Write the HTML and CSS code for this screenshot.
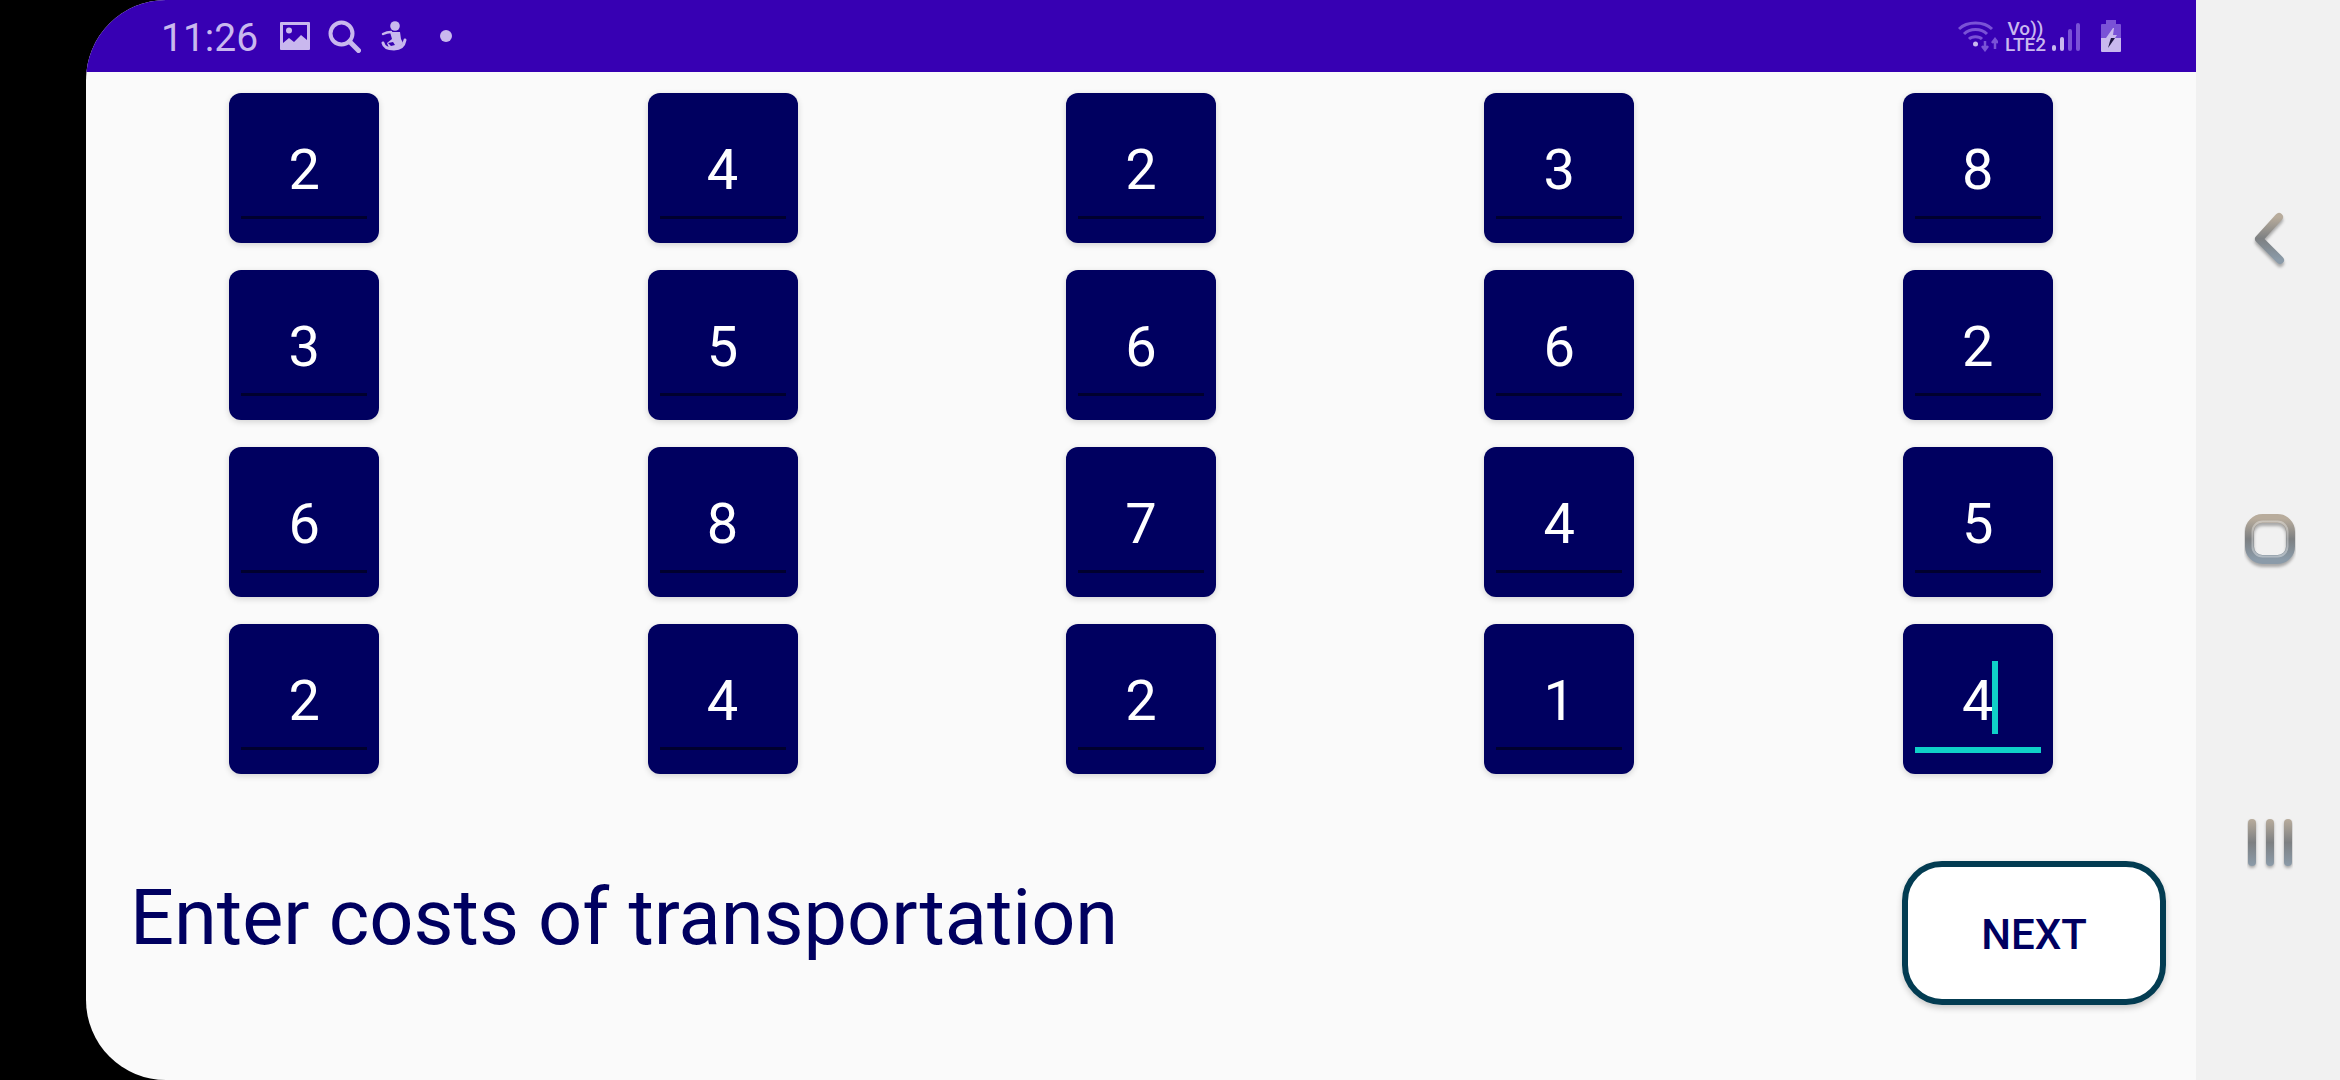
FILE: index.html
```html
<!DOCTYPE html>
<html lang="en">

<head>
    <meta charset="UTF-8">
    <title>Enter costs of transportation</title>
    <link rel="stylesheet" href="styles.css">
</head>

<body>
    <div class="screen">
        <!-- Status bar -->
        <div class="status-bar">
            <div class="status-left">
                <span class="time">11:26</span>
                <svg class="icon-gallery" width="30" height="28" viewBox="0 0 30 28">
                    <path fill="#c9b8ee" fill-rule="evenodd" d="M1 0h28a1 1 0 0 1 1 1v26a1 1 0 0 1-1 1H1a1 1 0 0 1-1-1V1a1 1 0 0 1 1-1zM3 3v18l6-5 5 4 7-7 6 5V3z"/>
                    <circle cx="9" cy="8.500" r="3" fill="#c9b8ee"/>
                </svg>
                <svg class="icon-search" width="33" height="33" viewBox="0 0 33 33">
                    <circle cx="13.500" cy="13.500" r="11" fill="none" stroke="#c9b8ee" stroke-width="4"/>
                    <path d="M21.500 21.500l9 9" stroke="#c9b8ee" stroke-width="5" stroke-linecap="round"/>
                </svg>
                <svg class="icon-figure" width="26" height="30" viewBox="0 0 26 30">
                    <circle cx="14" cy="5" r="4.800" fill="#c9b8ee"/>
                    <path fill="none" stroke="#c9b8ee" stroke-width="2.500" stroke-linecap="round" d="M2 13c2-1 5-2 8-2"/>
                    <path fill="#c9b8ee" d="M9 11h10l1 7 2 4-4 5H8l-2-5 5-4z"/>
                    <path fill="none" stroke="#c9b8ee" stroke-width="3" stroke-linecap="round" d="M2 22c1 5 6 6 11 6 6 0 10-3 11-9"/>
                    <path fill="#3700b3" d="M7 22l5-1 2 3-4 1z"/>
                </svg>
                <span class="dot"></span>
            </div>
            <div class="status-right">
                <svg class="icon-wifi" width="40" height="32" viewBox="0 0 40 32">
                    <g fill="none" stroke="#7a52d6" stroke-width="3">
                        <path d="M1 9c8-8 25-8 33 0"/>
                        <path d="M6 14c6-6 17-6 23 0"/>
                        <path d="M11 19c3-3 10-3 13 0"/>
                    </g>
                    <circle cx="17.500" cy="24" r="2.500" fill="#c9b8ee"/>
                    <path d="M27 21v8M24 26l3 4 3-4" fill="none" stroke="#7a52d6" stroke-width="2.500"/>
                    <path d="M37 29v-9M34 23l3-4 3 4" fill="none" stroke="#7a52d6" stroke-width="2.500"/>
                </svg>
                <div class="volte">Vo))<br>LTE2</div>
                <div class="signal">
                    <span class="bar bar-1"></span>
                    <span class="bar bar-2"></span>
                    <span class="bar bar-3"></span>
                    <span class="bar bar-4"></span>
                </div>
                <svg class="icon-battery" width="20" height="32" viewBox="0 0 20 32">
                    <path fill="#7a52d6" d="M5 0h10v4h4a1 1 0 0 1 1 1v13H0V5a1 1 0 0 1 1-1h4z"/>
                    <path fill="#c9b8ee" d="M0 18h20v13a1 1 0 0 1-1 1H1a1 1 0 0 1-1-1z"/>
                    <path fill="#c9b8ee" d="M12 8L5 18h5l-1 3h3l4-6h-4l1-7z"/>
                    <path fill="#1c1240" d="M10 18h4l-7 10 2-7 1-3z"/>
                </svg>
            </div>
        </div>

        <!-- Cost inputs -->
        <div class="content">
            <div class="cost-grid">
                <div class="cell">2</div>
                <div class="cell">4</div>
                <div class="cell">2</div>
                <div class="cell">3</div>
                <div class="cell">8</div>
                <div class="cell">3</div>
                <div class="cell">5</div>
                <div class="cell">6</div>
                <div class="cell">6</div>
                <div class="cell">2</div>
                <div class="cell">6</div>
                <div class="cell">8</div>
                <div class="cell">7</div>
                <div class="cell">4</div>
                <div class="cell">5</div>
                <div class="cell">2</div>
                <div class="cell">4</div>
                <div class="cell">2</div>
                <div class="cell">1</div>
                <div class="cell focused">4<span class="caret"></span></div>
            </div>

            <div class="footer-row">
                <h1 class="title">Enter costs of transportation</h1>
                <button class="next-button">NEXT</button>
            </div>
        </div>
    </div>

    <!-- Navigation bar -->
    <div class="nav-bar">
        <svg class="nav-back" width="36" height="58" viewBox="0 0 36 58">
            <defs>
                <linearGradient id="chrome" x1="0" y1="0" x2="0" y2="1">
                    <stop offset="0" stop-color="#b8ac9c"/>
                    <stop offset="0.5" stop-color="#7d8082"/>
                    <stop offset="1" stop-color="#8b9ba9"/>
                </linearGradient>
                <filter id="soft" x="-30%" y="-30%" width="160%" height="160%">
                    <feGaussianBlur stdDeviation="1.500"/>
                </filter>
            </defs>
            <path d="M27 5L7 27l21 21" fill="none" stroke="rgba(0,0,0,0.3)" stroke-width="8" stroke-linecap="round" stroke-linejoin="round" transform="translate(0 3)" filter="url(#soft)"/>
            <path d="M27 5L7 27l21 21" fill="none" stroke="url(#chrome)" stroke-width="8" stroke-linecap="round" stroke-linejoin="round"/>
        </svg>
        <svg class="nav-home" width="52" height="58" viewBox="0 0 52 58">
            <rect x="5.500" y="8.500" width="41" height="41" rx="13" fill="none" stroke="rgba(0,0,0,0.3)" stroke-width="9" filter="url(#soft)"/>
            <rect x="5.500" y="5.500" width="41" height="41" rx="13" fill="none" stroke="url(#chrome)" stroke-width="9"/>
            <rect x="8.500" y="8.500" width="35" height="35" rx="10" fill="none" stroke="rgba(255,255,255,0.35)" stroke-width="2"/>
        </svg>
        <svg class="nav-recent" width="46" height="54" viewBox="0 0 46 54">
            <g fill="rgba(0,0,0,0.3)" filter="url(#soft)">
                <rect x="1" y="3" width="8" height="47" rx="4"/>
                <rect x="19" y="3" width="8" height="47" rx="4"/>
                <rect x="37" y="3" width="8" height="47" rx="4"/>
            </g>
            <g fill="url(#chrome)">
                <rect x="1" y="1" width="8" height="47" rx="4"/>
                <rect x="19" y="1" width="8" height="47" rx="4"/>
                <rect x="37" y="1" width="8" height="47" rx="4"/>
            </g>
        </svg>
    </div>
</body>

</html>
```

FILE: styles.css
```css
body {
    margin: 0;
    width: 2340px;
    height: 1080px;
    padding-left: 86px;
    box-sizing: border-box;
    display: flex;
    background-color: #000;
    font-family: 'Roboto', sans-serif;
    overflow: hidden;
}

.screen {
    width: 2110px;
    height: 1080px;
    display: flex;
    flex-direction: column;
    background-color: #fafafa;
    border-radius: 80px 0 0 80px;
    overflow: hidden;
}

.status-bar {
    height: 72px;
    flex-shrink: 0;
    background-color: #3700b3;
    color: #c9b8ee;
    display: flex;
    justify-content: space-between;
    align-items: center;
    padding: 0 75px 0 75px;
}

.status-left,
.status-right {
    display: flex;
    align-items: center;
}

.time {
    font-size: 39px;
    line-height: 67px;
    padding-top: 5px;
    margin-right: 22px;
}

.icon-search {
    margin-left: 18px;
}

.icon-figure {
    margin-left: 20px;
}

.dot {
    width: 12px;
    height: 12px;
    border-radius: 50%;
    background-color: #c9b8ee;
    margin-left: 33px;
}

.volte {
    margin-left: 7px;
    padding-top: 1px;
    font-size: 19px;
    font-weight: 500;
    line-height: 16px;
    text-align: center;
}

.signal {
    display: flex;
    align-items: flex-end;
    gap: 4px;
    height: 28px;
    margin-left: 6px;
    margin-right: 21px;
    padding-top: 1px;
}

.bar {
    width: 4px;
    background-color: #7a52d6;
    border-radius: 2px;
}

.bar-1 {
    height: 6px;
    background-color: #c9b8ee;
}

.bar-2 {
    height: 14px;
    background-color: #c9b8ee;
}

.bar-3 {
    height: 22px;
}

.bar-4 {
    height: 28px;
}

.content {
    flex: 1;
    display: flex;
    flex-direction: column;
    padding: 21px 30px 0 44px;
}

.cost-grid {
    display: grid;
    grid-template-columns: repeat(5, 150px);
    grid-auto-rows: 150px;
    justify-content: space-between;
    row-gap: 27px;
    width: 1823.6px;
    margin-left: 99.2px;
}

.cell {
    position: relative;
    display: flex;
    justify-content: center;
    align-items: center;
    box-sizing: border-box;
    padding-top: 4px;
    background-color: #000060;
    border-radius: 12px;
    box-shadow: 0 2px 6px rgba(0, 0, 0, 0.16);
    color: #fff;
    font-size: 56px;
}

/* edit text underline */
.cell::after {
    content: "";
    position: absolute;
    left: 12px;
    right: 12px;
    bottom: 24px;
    height: 3px;
    background-color: #00002e;
}

.cell.focused::after {
    height: 6px;
    bottom: 21px;
    background-color: #0fd0c8;
}

.caret {
    position: absolute;
    left: 89px;
    top: 37px;
    width: 6px;
    height: 73px;
    background-color: #0fd0c8;
}

.footer-row {
    display: flex;
    justify-content: space-between;
    align-items: flex-start;
    margin-top: 87px;
}

.title {
    margin: 0;
    padding-top: 10px;
    font-size: 77.5px;
    font-weight: 400;
    line-height: 94px;
    color: #000060;
}

.next-button {
    width: 264px;
    height: 144px;
    box-sizing: border-box;
    padding-top: 4px;
    background-color: #fff;
    border: 6px solid #033c52;
    border-radius: 40px;
    box-shadow: 0 3px 6px rgba(0, 0, 0, 0.2);
    color: #000060;
    font-family: 'Roboto', sans-serif;
    font-size: 42px;
    font-weight: 500;
}

.nav-bar {
    flex: 1;
    display: flex;
    flex-direction: column;
    align-items: center;
    padding-top: 212px;
    padding-left: 4px;
    background-color: #f1f1f1;
}

.nav-home {
    margin-top: 243px;
}

.nav-recent {
    margin-top: 247px;
}
```
